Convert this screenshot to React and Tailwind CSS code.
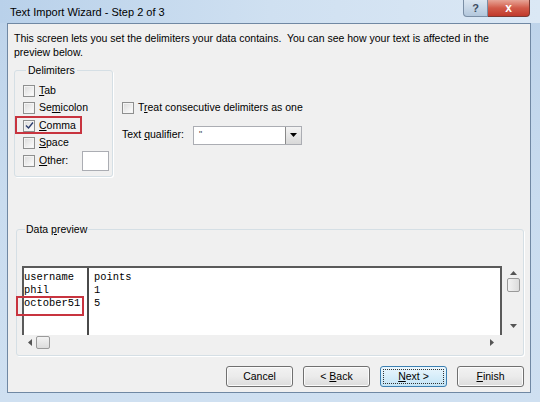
import React from 'react';

const U = ({ children }) => <span className="underline">{children}</span>;

const Check = ({ checked }) => (
  <span className="inline-flex items-center justify-center w-[12px] h-[12px] border border-[#8e8f8f] bg-gradient-to-br from-[#dadada] to-white shadow-[inset_0_0_0_1px_#f4f4f4] shrink-0">
    {checked && (
      <svg width="9" height="9" viewBox="0 0 9 9">
        <path d="M1 4.5 L3.5 7 L8 1.5" fill="none" stroke="#2a3c6e" strokeWidth="1.4" />
      </svg>
    )}
  </span>
);

const Btn = ({ children, focused }) => (
  <button
    className={
      focused
        ? 'w-[67px] h-[21px] rounded-[3px] border border-[#3c7fb1] bg-gradient-to-b from-[#eaf6fd] to-[#c4e5f6] p-[2px]'
        : 'w-[67px] h-[21px] rounded-[3px] border border-[#707070] bg-gradient-to-b from-[#f2f2f2] via-[#ebebeb] to-[#dcdcdc] shadow-[inset_0_0_0_1px_#fbfbfb]'
    }
  >
    {focused ? (
      <span className="flex items-center justify-center w-full h-full border border-dotted border-[#333]">{children}</span>
    ) : (
      children
    )}
  </button>
);

export default function App() {
  const delimiters = [
    { label: <><U>T</U>ab</> },
    { label: <>Se<U>m</U>icolon</> },
    { label: <><U>C</U>omma</>, checked: true, marked: true },
    { label: <><U>S</U>pace</> },
  ];

  return (
    <div className="w-[540px] h-[402px] overflow-hidden bg-gradient-to-b from-[#bdd3ea] via-[#c9dcef] to-[#cfe0f1] text-[10.5px] text-black font-['Liberation_Sans',Arial,sans-serif] flex flex-col">
      {/* title bar */}
      <div className="h-[23px] flex items-start shrink-0 bg-gradient-to-r from-[#b9d1ea] via-[#cfe0f1] to-[#dbe8f5]">
        <span className="pl-[10px] pt-[5px] text-[11px] leading-[14px]">Text Import Wizard - Step 2 of 3</span>
        <div className="ml-auto mr-[10px] flex">
          <div className="w-[25px] h-[17px] rounded-bl-[4px] border border-[#7a8ea5] border-t-0 bg-gradient-to-b from-[#dbe6f1] to-[#b3c7dc] flex items-center justify-center text-[11px] text-[#3d4c5f] font-bold">?</div>
          <div className="w-[42px] h-[17px] rounded-br-[4px] border border-[#7a3a33] border-t-0 border-l-0 bg-gradient-to-b from-[#e6a497] via-[#d15a49] to-[#c0392b] flex items-center justify-center text-white font-bold text-[12px] leading-none">x</div>
        </div>
      </div>

      {/* client area */}
      <div className="ml-[7px] w-[524px] h-[370px] border border-[#7088a3] bg-[#f0f0f0] flex flex-col">
        <p className="pl-[6px] pt-[7px] leading-[14px]">
          This screen lets you set the delimiters your data contains.&nbsp; You can see how your text is affected in the
          <br />
          preview below.
        </p>

        <div className="flex mt-[4px]">
          <fieldset className="ml-[6px] w-[99px] h-[114px] border border-[#d5dfe5] rounded-[3px] pl-[8px] shadow-[1px_1px_0_#fff]">
            <legend className="ml-[3px] px-[2px] leading-[14px]">Delimiters</legend>
            <div className="pt-[5px] flex flex-col">
              {delimiters.map((d, i) => (
                <div key={i} className="relative h-[17.5px] flex items-center gap-[4px]">
                  <Check checked={d.checked} />
                  <span>{d.label}</span>
                  {d.marked && (
                    <span className="absolute left-[-8px] top-[-1px] w-[67px] h-[18px] border-2 border-[#c8343f]" />
                  )}
                </div>
              ))}
              <div className="h-[20px] flex items-center gap-[4px] mt-[-1px]">
                <Check />
                <span className="w-[39px]"><U>O</U>ther:</span>
                <span className="w-[27px] h-[20px] border border-[#abadb3] bg-white" />
              </div>
            </div>
          </fieldset>

          <div className="ml-[9px] pt-[38px] flex flex-col">
            <div className="h-[14px] flex items-center gap-[4px]">
              <Check />
              <span>T<U>r</U>eat consecutive delimiters as one</span>
            </div>
            <div className="mt-[11px] h-[18px] flex items-center">
              <span className="w-[71px]">Text <U>q</U>ualifier:</span>
              <div className="w-[109px] h-[19px] border border-[#abadb3] bg-white flex">
                <span className="flex-1 pl-[5px] pt-[1px] leading-[12px] text-[#444] text-[9px]">"</span>
                <span className="w-[16px] h-full border-l border-[#8a8a8a] bg-gradient-to-b from-[#f4f4f4] to-[#d8d8d8] flex items-center justify-center">
                  <svg width="7" height="4" viewBox="0 0 7 4"><path d="M0 0 H7 L3.5 4 Z" fill="#000" /></svg>
                </span>
              </div>
            </div>
          </div>
        </div>

        <fieldset className="mt-[45px] ml-[8px] w-[508px] h-[134px] border border-[#d5dfe5] rounded-[3px] pl-[5px] shadow-[1px_1px_0_#fff]">
          <legend className="ml-[3px] px-[1px] leading-[14px]">Data <U>p</U>review</legend>
          <div className="pt-[30px] grid grid-cols-[480px_15px]">
            <div className="h-[69px] border-2 border-b-0 border-[#5a5a5a] bg-white flex font-['Liberation_Mono','Courier_New',monospace] text-[10.4px] leading-[13px]">
              <div className="w-[63px] pt-[3px] shrink-0">
                <div>username</div>
                <div>phil</div>
                <div className="relative">
                  october51
                  <span className="absolute left-[-8px] top-[-1px] w-[68px] h-[20px] border-2 border-[#c8343f]" />
                </div>
              </div>
              <div className="w-[2px] bg-[#4a4a4a] shrink-0" />
              <div className="pl-[5px] pt-[3px]">
                <div>points</div>
                <div>1</div>
                <div>5</div>
              </div>
            </div>
            <div className="h-[69px] flex flex-col items-center">
              <svg className="mt-[5px] ml-[8px]" width="7" height="4" viewBox="0 0 7 4"><path d="M0 4 L3.5 0 L7 4 Z" fill="#555" /></svg>
              <div className="mt-[3px] ml-[8px] w-[13px] h-[14px] rounded-[2px] border border-[#9a9a9a] bg-gradient-to-r from-[#f3f3f3] to-[#dcdcdc]" />
              <svg className="mt-auto mb-[7px] ml-[8px]" width="7" height="4" viewBox="0 0 7 4"><path d="M0 0 H7 L3.5 4 Z" fill="#555" /></svg>
            </div>
            <div className="h-[14px] flex items-center">
              <svg className="ml-[6px]" width="4" height="7" viewBox="0 0 4 7"><path d="M4 0 V7 L0 3.5 Z" fill="#555" /></svg>
              <div className="ml-[4px] w-[14px] h-[13px] rounded-[2px] border border-[#9a9a9a] bg-gradient-to-b from-[#f3f3f3] to-[#dcdcdc]" />
              <svg className="ml-auto mr-[8px]" width="4" height="7" viewBox="0 0 4 7"><path d="M0 0 V7 L4 3.5 Z" fill="#555" /></svg>
            </div>
          </div>
        </fieldset>

        <div className="mt-[10px] mr-[6px] flex justify-end gap-[10px]">
          <Btn>Cancel</Btn>
          <Btn>&lt; <U>B</U>ack</Btn>
          <Btn focused><U>N</U>ext &gt;</Btn>
          <Btn><U>F</U>inish</Btn>
        </div>
      </div>
    </div>
  );
}
